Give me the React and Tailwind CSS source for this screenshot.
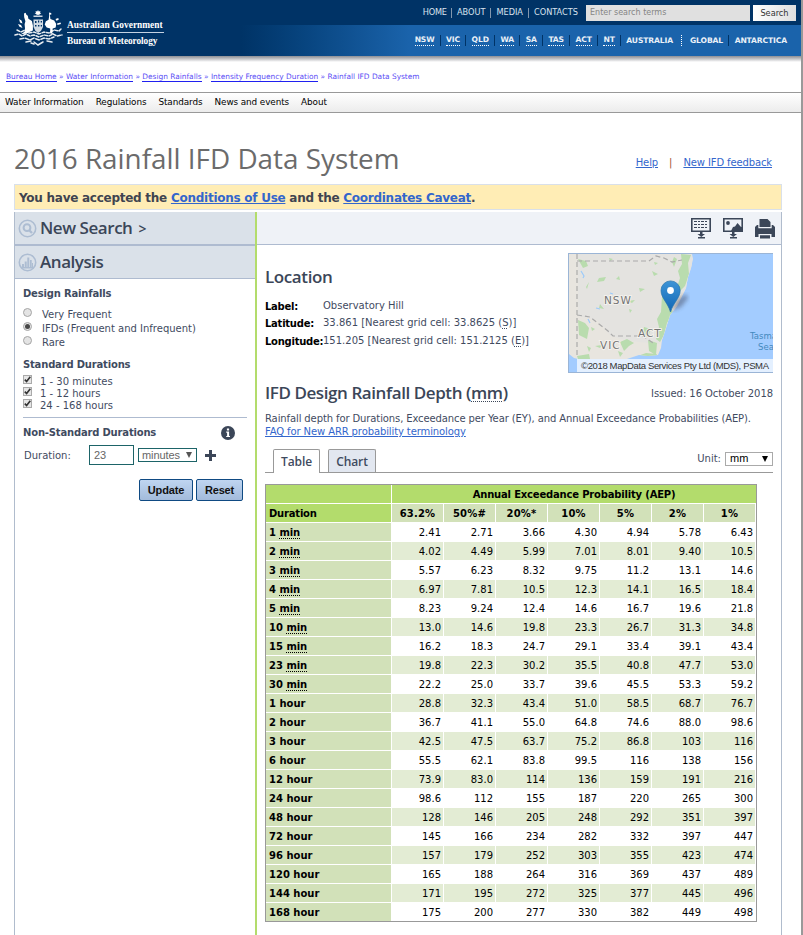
import React from "react";

const rows = [
  ["1", "min", "2.41 2.71 3.66 4.30 4.94 5.78 6.43"],
  ["2", "min", "4.02 4.49 5.99 7.01 8.01 9.40 10.5"],
  ["3", "min", "5.57 6.23 8.32 9.75 11.2 13.1 14.6"],
  ["4", "min", "6.97 7.81 10.5 12.3 14.1 16.5 18.4"],
  ["5", "min", "8.23 9.24 12.4 14.6 16.7 19.6 21.8"],
  ["10", "min", "13.0 14.6 19.8 23.3 26.7 31.3 34.8"],
  ["15", "min", "16.2 18.3 24.7 29.1 33.4 39.1 43.4"],
  ["23", "min", "19.8 22.3 30.2 35.5 40.8 47.7 53.0"],
  ["30", "min", "22.2 25.0 33.7 39.6 45.5 53.3 59.2"],
  ["1", "hour", "28.8 32.3 43.4 51.0 58.5 68.7 76.7"],
  ["2", "hour", "36.7 41.1 55.0 64.8 74.6 88.0 98.6"],
  ["3", "hour", "42.5 47.5 63.7 75.2 86.8 103 116"],
  ["6", "hour", "55.5 62.1 83.8 99.5 116 138 156"],
  ["12", "hour", "73.9 83.0 114 136 159 191 216"],
  ["24", "hour", "98.6 112 155 187 220 265 300"],
  ["48", "hour", "128 146 205 248 292 351 397"],
  ["72", "hour", "145 166 234 282 332 397 447"],
  ["96", "hour", "157 179 252 303 355 423 474"],
  ["120", "hour", "165 188 264 316 369 437 489"],
  ["144", "hour", "171 195 272 325 377 445 496"],
  ["168", "hour", "175 200 277 330 382 449 498"],
];

const cols = ["63.2%", "50%#", "20%*", "10%", "5%", "2%", "1%"];
const treb = "font-['Open_Sans',sans-serif]";

function Crest() {
  return (
    <svg className="ml-[14px] mt-[10px] h-[36px] w-[50px] shrink-0" viewBox="0 0 50 36" fill="#fff">
      <path d="M24 0l.8 1.5 1.7-.5-.5 1.600 1.300 1-1.700.4-.3 1.500-1.300-1-1.300 1-.3-1.500-1.700-.4 1.300-1-.5-1.600 1.700.5z" />
      <path d="M19.500 5.600h9v1.200h-9z" />
      <path d="M10 3.500l1.600-.8.8 2.100 1.400 1 .6 3 3.500 2.200 1 4.500v5l-3.500 1.500-2.500 1.500-6 .8 3.600-2.500.5-3.500-.4-4 .8-3-1.200-4z" />
      <path d="M19.500 9.500h9.500v7.500q-1.300 4-4.800 6-3.700-2-4.700-6z" opacity=".82" />
      <path d="M35 2.500l2.200.5.200 1.500-1.500.3.500 4.200 3.800 1.500 2 3.500-.5 3.500-3 1-.5 4 1.500 1.500-3.500-.5v-5l-3.500-1-2-3 1.200-3.200 2.700-1.500.6-4z" />
      <path d="M5 9l2.500 1.500 1 3-2.500-1zM4 14l3 1 1.500 3-3-1.200zM41.500 9l2.800-1 .4 1.700-2.300 1zM43 13.500l3.500-1 .5 1.500-3.500 1z" />
      <g stroke="#fff" strokeWidth="1.500" fill="none" strokeLinecap="round" opacity=".9">
        <path d="M1 25l4-1 3 2 4-2 4 2 4-1 5 2 5-2 5 1 4-2 4 2 5-1" strokeDasharray="3 1.600" />
        <path d="M3 20l4 2 4-2 4 3 5-1 5 2 5-2 5 1 5-3 5 1 2-2" strokeDasharray="3 1.600" />
        <path d="M6 29l5-1 5 2 4-2 5 2 5-2 5 1 5-2" strokeDasharray="4 1.600" />
        <path d="M12 32l5-1M20 32l4 3 5-3M33 31l5 1M17 33l3 1" />
      </g>
      <g fill="#003366">
        <path d="M21 11h1.500v2H21zM24 10.500h1.200v2H24zM26.700 11H28v1.500h-1.300zM21 15h1.500v1.500H21zM24 15h1.400v1.600H24zM26.700 15H28v1.400h-1.300z" />
      </g>
    </svg>
  );
}

function Header() {
  const states = ["NSW", "VIC", "QLD", "WA", "SA", "TAS", "ACT", "NT"];
  return (
    <header className="flex h-14 w-[801px] bg-[#003366] text-[#d9e2ee]">
      <Crest />
      <div className="ml-[3px] mt-[19px] w-[97px] shrink-0 whitespace-nowrap font-['Liberation_Serif',serif] leading-[12px] text-white">
        <div className="border-b border-[#c5d2e2] pb-[1px] text-[9.4px] font-bold">Australian Government</div>
        <div className="pt-[2px] text-[9.3px] font-bold tracking-[-0.06px]">Bureau of Meteorology</div>
      </div>
      <div className="ml-auto flex w-[560px] flex-col whitespace-nowrap">
        <div className="flex h-[25px] items-center justify-end pr-[5px] text-[8.200px]">
          <span className="mr-[4px] tracking-[-0.15px]">HOME</span><i className="h-[10px] w-px bg-[#8296ad]" />
          <span className="mx-[5px]">ABOUT</span><i className="h-[10px] w-px bg-[#8296ad]" />
          <span className="mx-[5px]">MEDIA</span><i className="h-[10px] w-px bg-[#8296ad]" />
          <span className="mx-[5px]">CONTACTS</span>
          <div className="ml-[3px] h-4 w-[164px] bg-[#e0e0e0] pl-[4px] text-[8px] leading-[16px] text-[#858585]">Enter search terms</div>
          <div className="ml-[3px] h-4 w-[43px] bg-gradient-to-r from-white to-[#dedede] text-center text-[8.200px] leading-[16px] text-[#333]">Search</div>
        </div>
        <div className="flex h-[31px] items-center justify-end bg-gradient-to-r from-[#003366] to-[#1a63ab] to-30% pr-[14px] text-[7.600px] font-bold leading-[10px] tracking-[-0.12px] text-[#eaf1f8]">
          {states.map((s) => (
            <React.Fragment key={s}>
              <span className="border-b border-dotted border-white">{s}</span>
              <i className="mx-[5.300px] h-[11px] w-px bg-[#003366]" />
            </React.Fragment>
          ))}
          <span>AUSTRALIA</span>
          <i className="mx-[8px] h-[11px] w-0 border-l border-dotted border-white" />
          <span>GLOBAL</span>
          <i className="mx-[5.300px] h-[11px] w-px bg-[#003366]" />
          <span>ANTARCTICA</span>
        </div>
      </div>
    </header>
  );
}

function Panel() {
  return (
    <aside className="flex w-[243px] shrink-0 flex-col border-l border-[#b0bccd] border-r-2 border-r-[#b3dc6c]">
      <div className={"flex h-[34px] items-center border-b-2 border-[#aebbd0] bg-[#dae1e9] pl-[3px] text-[17px] font-semibold text-[#3b4658] " + treb}>
        <svg width="19" height="19" viewBox="0 0 19 19" fill="none" stroke="#adbdd2" className="mr-[3px]">
          <circle cx="9.500" cy="9.500" r="8.200" strokeWidth="1.600" /><circle cx="9" cy="8.700" r="3.400" strokeWidth="2" /><path d="M11.500 11.500l2.500 2.500" strokeWidth="2.400" />
        </svg>
        <span className="tracking-[-0.45px]">New Search</span><span className="ml-[6px] text-[14px]">&gt;</span>
      </div>
      <div className={"flex h-[33px] items-center border-b border-[#aebbd0] bg-[#dae1e9] pl-[3px] text-[17px] font-semibold text-[#3b4658] " + treb}>
        <svg width="19" height="19" viewBox="0 0 19 19" fill="#adbdd2" className="mr-[3px]">
          <circle cx="9.500" cy="9.500" r="8.200" strokeWidth="1.600" fill="none" stroke="#adbdd2" />
          <path d="M4 11h2v4H4zM6.700 8.500h2V15h-2zM9.300 4.500h2V15h-2zM12 7h1.700v8H12zM14 10h1v5h-1zM3.500 14h11.500v1.500H3.500z" />
        </svg>
        <span className="tracking-[-0.45px]">Analysis</span>
      </div>
      <div className="px-2 text-[10px] leading-[14px] text-[#3f4b5f]">
        <div className="mt-2 font-bold tracking-[-0.18px]">Design Rainfalls</div>
        <div className="mt-[6px]">
          {["Very Frequent", "IFDs (Frequent and Infrequent)", "Rare"].map((t, i) => (
            <div key={t} className="flex h-[14px]">
              <i className="mt-px flex size-[9px] items-center justify-center rounded-full border border-[#a5a5a5] bg-[#e4e4e4]">
                {i === 1 && <b className="size-[5px] rounded-full bg-[#484848]" />}
              </i>
              <span className="ml-[10px] mt-[1px]">{t}</span>
            </div>
          ))}
        </div>
        <div className="mt-[9px] font-bold tracking-[-0.18px]">Standard Durations</div>
        <div className="mt-[2px]">
          {["1 - 30 minutes", "1 - 12 hours", "24 - 168 hours"].map((t) => (
            <div key={t} className="flex h-[12px]">
              <i className="mt-[1px] size-[9px] border border-[#aaa] bg-[#e6e6e6]">
                <svg viewBox="0 0 7 7" className="block size-[7px]"><path d="M.8 3.600l1.800 2L6.300.8" fill="none" stroke="#333" strokeWidth="1.600" /></svg>
              </i>
              <span className="ml-[8px] mt-[1px]">{t}</span>
            </div>
          ))}
        </div>
        <div className="mt-[7px] h-px w-[224px] bg-[#aebbd0]" />
        <div className="mt-[8px] flex h-[14px] items-center">
          <b className="tracking-[-0.18px]">Non-Standard Durations</b>
          <svg width="14" height="14" viewBox="0 0 14 14" className="ml-auto mr-[12px]"><circle cx="7" cy="7" r="7" fill="#3b4658" /><path d="M5.900 2.600h2.200v2H5.900zM5.200 5.600h2.900v4.300h.9v1.200H5.200V9.900h.9V6.800h-.9z" fill="#fff" /></svg>
        </div>
        <div className="mt-[5px] flex h-5 items-center">
          <span className="w-[66px] pl-[1px] pt-px">Duration:</span>
          <span className="h-5 w-[45px] border border-[#1d6468] pl-[4px] font-['Liberation_Sans',sans-serif] text-[11px] leading-[18px] text-[#666]">23</span>
          <span className="ml-[4px] flex h-[14px] w-[59px] items-center border border-[#1d6468] pl-[3px] font-['Liberation_Sans',sans-serif] text-[11px] tracking-[-0.1px] text-[#666]">minutes
            <svg width="6" height="6" viewBox="0 0 6 6" className="ml-[6px]"><path d="M0 0h6L3 6z" fill="#555" /></svg>
          </span>
          <svg width="11" height="11" viewBox="0 0 11 11" className="ml-[8px]"><path d="M4 0h3v4h4v3H7v4H4V7H0V4h4z" fill="#3b4658" /></svg>
        </div>
        <div className="mt-[14px] flex gap-[3px] pl-[116px] font-['Liberation_Sans',sans-serif] text-[11px] font-bold leading-[20px] tracking-[-0.15px] text-[#111]">
          <span className="h-[22px] w-[54px] rounded-[2px] border border-[#0f4a83] bg-gradient-to-b from-[#bfd5f1] to-[#a3bbdb] text-center">Update</span>
          <span className="h-[22px] w-[47px] rounded-[2px] border border-[#0f4a83] bg-gradient-to-b from-[#bfd5f1] to-[#a3bbdb] text-center">Reset</span>
        </div>
      </div>
    </aside>
  );
}

function ToolIcons() {
  return (
    <svg width="86" height="22" viewBox="0 0 86 22" fill="#3b4658">
      <path fillRule="evenodd" d="M0 0h20v14H0zM1.600 1.600v10.800h16.800V1.600z" />
      <path d="M3 3.500h14M3 6.500h14M3 9.500h14" stroke="#3b4658" strokeWidth="1.200" strokeDasharray="3 1 2 1" />
      <path d="M9 14h2.500v2H14l-3.700 3L6.500 16H9zM7 19h7v1.500H7z" />
      <path fillRule="evenodd" d="M32 0h20v14H32zM33.600 1.600v10.800h16.800V1.600z" />
      <circle cx="37" cy="5" r="1.900" />
      <path d="M40 13l2-4 2-.5 2.500-3.500 3.500 4h1v4z" />
      <path d="M41 14h2.500v2H46l-3.700 3-3.800-3H41zM39 19h7v1.500h-7z" />
      <path d="M68.500 1h8l3 3v5h-11zM64 9l2-2h1.300v3.200h13.400V7H82l2 2v10h-3.500v-3h-13v3H64zM69 17.200h10V20.500H69z" />
    </svg>
  );
}

function MapView() {
  return (
    <div className="h-[120px] w-[205px] shrink-0 border border-r-0 border-[#9bb5d6]">
      <svg width="204" height="118" viewBox="0 0 204 118" fontFamily="DejaVu Sans, sans-serif">
        <defs>
          <linearGradient id="pin" x2="0" y2="1"><stop stopColor="#3d94d6" /><stop offset="1" stopColor="#1267b5" /></linearGradient>
          <filter id="soft"><feGaussianBlur stdDeviation="2.200" /></filter>
          <clipPath id="land"><path d="M0 0h123l1 5-2 9-3 9-2 11-4 8-5 10-7 9-4 13-4 12-1 8-3 7-10 1-9-1-12 4H9l-4-1-5-4z" /></clipPath>
        </defs>
        <path d="M0 0h204v118H0z" fill="#a3ccff" />
        <g clipPath="url(#land)">
          <path d="M0 0h140v118H0z" fill="#e8e5df" />
          <path d="M9 0h114v60L90 90 60 87 42 82 28 66 9 62z" fill="#e4e3e0" />
          <g fill="#b9dcae">
            <path d="M112 0l10 1-3 8 1 11-4 12-6 6-2-5 3-9-2-7 4-7zM105 3l3 2-3 8-2-5zM9 66l7 3 4 5-2 11-8-4zM93 42l7 8 4 8-6 11-3 12-4 7-4-3 3-12-2-8 4-7zM75 73l7 2-3 8-6-2zM79 86l9 3-1 12-7-4zM51 88l7-3 7 4-5 3-5 5zM8 102l12-2 1 5-11 3zM66 103l11-4 11 1-2 4-17 2zM9 5l8 2 2 5-5 2zM30 24l7-1-2 4-7 1zM17 33l3-5-2 7zM58 47l8-1-3 3zM31 50l4 5-5-1zM83 17l6 3-4 2zM26 92l7-1-2 3z" />
            <path d="M47 25l3-3 1 4zM96 29l5 2-4 3zM70 34l6 1-5 3zM18 92l4 2-2 4zM40 4l4 1-3 2zM49 97l5 2-3 4zM60 55l3 1-2 3zM85 8l4 1-3 2zM22 73l4 2-3 2z" />
          </g>
          <path d="M8 0v104M8 7h72l7-5 8 2 8 4 10-2M8 61l13 2 9 7 9 7 5 5h30l10 7" fill="none" stroke="#aaa" strokeWidth="1.200" strokeDasharray="5 3" />
          <path d="M12 17l3 5-1 2M41 39l3 1M27 54l4 1M33 91l3 3M19 65l2 4" stroke="#9ccafa" fill="none" strokeWidth="1.200" />
        </g>
        <path d="M102 57l7-12 8-5 2 4-7 9z" fill="#334" opacity=".42" filter="url(#soft)" />
        <path d="M101.500 58C99 49 92 44 92 36.500a9.600 9.600 0 0119.200 0C111.200 44 104 49 101.500 58z" fill="url(#pin)" stroke="#2473ae" strokeWidth=".7" />
        <circle cx="101.500" cy="36.500" r="3.400" fill="#fff" />
        <g fill="#747474" stroke="#f3f1ed" strokeWidth="2" paintOrder="stroke" fontSize="10.500" letterSpacing="1">
          <text x="35" y="50">NSW</text><text x="69" y="83">ACT</text><text x="31" y="95">VIC</text>
        </g>
        <g fill="#4489bd" fontSize="8.500"><text x="181" y="85">Tasma</text><text x="189" y="95.500">Sea</text></g>
        <path d="M8 105h196v13H8z" fill="#fff" opacity=".7" />
        <text x="12" y="114.500" fontFamily="Liberation Sans, sans-serif" fontSize="9.500" fill="#333" textLength="188">©2018 MapData Services Pty Ltd (MDS), PSMA</text>
      </svg>
    </div>
  );
}

function DataTable() {
  return (
    <table className="mt-[11px] w-[492px] table-fixed border-separate border-spacing-0 border border-[#999] text-[10px] leading-[16px] text-black">
      <colgroup><col className="w-[126px]" />{cols.map((c) => <col key={c} className="w-[52px]" />)}</colgroup>
      <thead>
        <tr className="h-[19px] bg-[#b3dc6c]">
          <th className="border-b border-r border-white p-0 pt-[2px]" />
          <th colSpan={7} className="border-b border-white p-0 pt-[2px] font-bold tracking-[-0.18px]">Annual Exceedance Probability (AEP)</th>
        </tr>
        <tr className="h-[19px] bg-[#d2e1b9]">
          <th className="border-b border-r border-white bg-[#b3dc6c] p-0 pl-[3px] pt-[2px] text-left tracking-[-0.2px]">Duration</th>
          {cols.map((c) => <th key={c} className="border-b border-r border-white p-0 pt-[2px] tracking-[0.2px]">{c}</th>)}
        </tr>
      </thead>
      <tbody className="[&>tr:last-child>*]:border-b-0">
        {rows.map(([n, u, v], i) => (
          <tr key={n + u} className={(i % 2 ? "bg-[#e3ecd4]" : "bg-white") + (i === rows.length - 1 ? " h-[18px]" : " h-[19px]")}>
            <th className="border-b border-r border-white bg-[#d2e1b9] p-0 pl-[3px] pt-[2px] text-left">
              {n} {u === "min" ? <span className="inline-block border-b border-dotted border-black leading-[10px] tracking-[-0.15px]">min</span> : u}
            </th>
            {v.split(" ").map((x, j) => <td key={j} className="border-b border-r border-white p-0 pr-[2px] pt-[2px] text-right">{x}</td>)}
          </tr>
        ))}
      </tbody>
    </table>
  );
}

function Main() {
  return (
    <main className="min-w-0 flex-1 border-r border-[#b0bccd]">
      <div className="flex h-[33px] items-start justify-end border-b border-[#aebbd0] bg-[#eff2f7] pr-[4px] pt-[6px]"><ToolIcons /></div>
      <div className="pl-2 pr-2 text-[10px] text-[#3f4b5f]">
        <div className="mt-2 flex justify-between">
          <section>
            <h2 className={"mt-[12px] text-[17px] font-semibold leading-[24px] tracking-[-0.4px] text-[#3b4658] " + treb}>Location</h2>
            <dl className="mt-[8px] grid grid-cols-[58px_auto] whitespace-nowrap leading-[18px]">
              <dt className="pt-px font-bold tracking-[-0.25px] text-black">Label:</dt><dd className="h-[18px]">Observatory Hill</dd>
              <dt className="-mt-px font-bold tracking-[-0.25px] text-black">Latitude:</dt><dd className="-mt-[2px]">33.861 [Nearest grid cell: 33.8625 (<span className="underline decoration-dotted underline-offset-2">S</span>)]</dd>
              <dt className="font-bold tracking-[-0.25px] text-black">Longitude:</dt><dd className="-mt-px">151.205 [Nearest grid cell: 151.2125 (<span className="underline decoration-dotted underline-offset-2">E</span>)]</dd>
            </dl>
          </section>
          <MapView />
        </div>
        <div className="mt-[8px] flex items-center justify-between">
          <h2 className={"text-[17px] font-semibold leading-[24px] tracking-[-0.42px] text-[#3b4658] " + treb}>IFD Design Rainfall Depth (<span className="underline decoration-dotted decoration-1 underline-offset-2">mm</span>)</h2>
          <span className="tracking-[-0.06px]">Issued: 16 October 2018</span>
        </div>
        <p className="mt-[7px] whitespace-nowrap leading-[13px] tracking-[-0.11px]">Rainfall depth for Durations, Exceedance per Year (EY), and Annual Exceedance Probabilities (AEP).<br />
          <a className="text-[#3366cc] underline">FAQ for New ARR probability terminology</a></p>
        <div className="mt-[11px] flex h-[24px] items-end border-b border-[#999]">
          <div className={"-mb-px ml-2 h-[24px] w-[47px] rounded-t-[2px] border border-b-0 border-[#999] bg-white text-center text-[12px] font-semibold leading-[23px] tracking-[-0.1px] " + treb}>Table</div>
          <div className={"ml-2 h-[23px] w-[48px] rounded-t-[2px] border border-b-0 border-[#999] bg-[#e2e7f0] text-center text-[12px] font-semibold leading-[23px] tracking-[-0.1px] " + treb}>Chart</div>
          <div className="mb-[6px] ml-auto flex items-center">Unit:
            <span className="ml-[4px] flex h-[14px] w-[48px] items-center justify-between border border-[#aaa] px-[4px] font-['Liberation_Sans',sans-serif] text-[11px] text-black">mm
              <svg width="6" height="6" viewBox="0 0 6 6"><path d="M0 0h6L3 6z" /></svg>
            </span>
          </div>
        </div>
        <DataTable />
      </div>
    </main>
  );
}

export default function App() {
  return (
    <div className="h-[935px] w-[803px] overflow-hidden bg-white font-['DejaVu_Sans',sans-serif]">
      <div className="flex h-full flex-col border-r-2 border-[#999]">
        <Header />
        <div className="h-[6px] bg-gradient-to-b from-[#8c8e94] to-white" />
        <div className="flex h-[30px] items-center whitespace-pre pl-[6px] text-[7.420px] leading-[8px] text-[#5a4cf5]">
          {["Bureau Home", "Water Information", "Design Rainfalls", "Intensity Frequency Duration"].map((t) => (
            <React.Fragment key={t}><a className="border-b border-[#2020f0]">{t}</a>{" » "}</React.Fragment>
          ))}
          Rainfall IFD Data System
        </div>
        <nav className="flex h-[21px] items-center gap-[12px] whitespace-nowrap border-y border-[#999] bg-gradient-to-b from-white to-[#ececec] pl-[5px] text-[8.850px] tracking-[-0.09px] text-black">
          {["Water Information", "Regulations", "Standards", "News and events", "About"].map((t) => <span key={t}>{t}</span>)}
        </nav>
        <div className="flex min-h-0 flex-1 flex-col pl-[14px] pr-[19px]">
          <div className="flex h-[71px] items-end justify-between">
            <h1 className={"mb-[7px] whitespace-nowrap text-[27.850px] leading-[38px] text-[#6b6b6b] " + treb}>2016 Rainfall IFD Data System</h1>
            <div className="mb-[14px] mr-[10px] flex text-[10px] leading-[14px]">
              <a className="tracking-[-0.12px] text-[#3366cc] underline">Help</a><span className="mx-[11px] text-[#a0522d]">|</span><a className="tracking-[-0.12px] text-[#3366cc] underline">New IFD feedback</a>
            </div>
          </div>
          <div className="h-[26px] border border-[#d9e0ea] bg-[#ffedb5] pl-[4px] text-[12px] font-bold leading-[26px] tracking-[-0.26px] text-[#3f4450]">
            You have accepted the <a className="text-[#3366cc] underline">Conditions of Use</a> and the <a className="text-[#3366cc] underline">Coordinates Caveat</a>.
          </div>
          <div className="mt-[2px] flex min-h-0 flex-1">
            <Panel />
            <Main />
          </div>
        </div>
      </div>
    </div>
  );
}
